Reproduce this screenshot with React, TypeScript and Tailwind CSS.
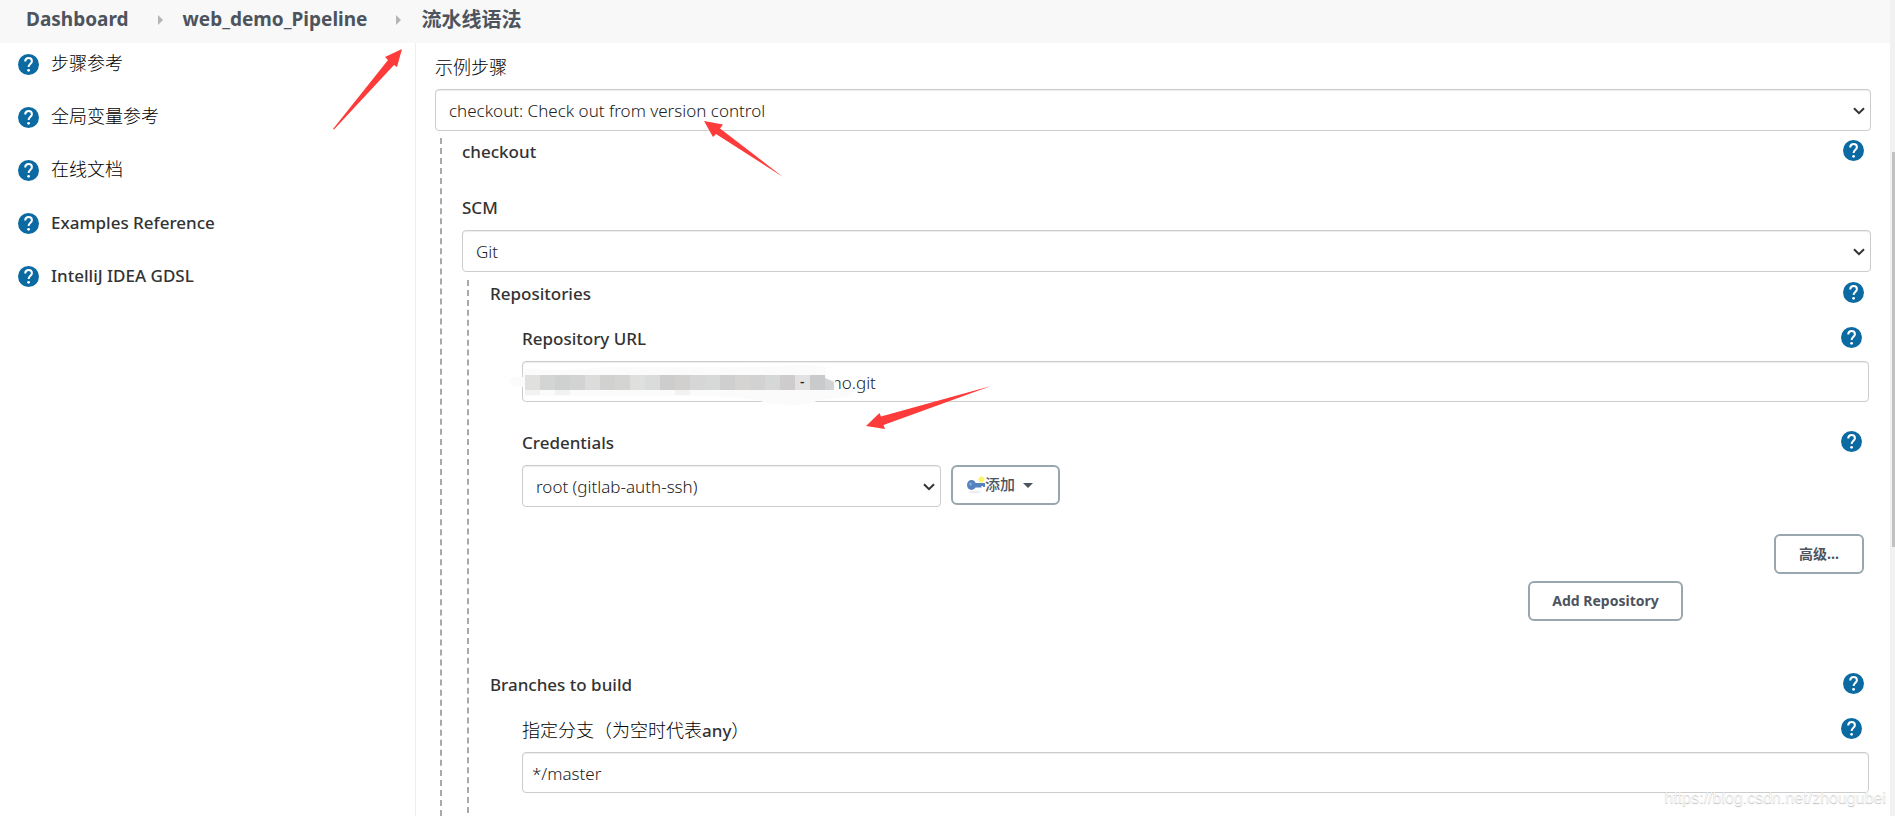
import React from 'react'

interface ISideLink {
    id: string;
    text: string;
    cjk?: boolean;
}

const sideLinks: ISideLink[] = [
    { id: "1", text: "步骤参考", cjk: true },
    { id: "2", text: "全局变量参考", cjk: true },
    { id: "3", text: "在线文档", cjk: true },
    { id: "4", text: "Examples Reference" },
    { id: "5", text: "IntelliJ IDEA GDSL" },
]

const mosaic = [
    "#e0e0df", "#d3d5d4", "#cfd1d0", "#d3d3d3", "#dcdcdc", "#d1d1d0", "#d4d4d3",
    "#dfdfdd", "#dadbdb", "#cdcdcd", "#d1d0cf", "#d5d6d5", "#d7d9d8", "#cfcfcf",
    "#d5d4d3", "#d3d2d2", "#d5d8d7", "#cfcccd", "#e2e2e2", "#c9cacc",
]

const fieldClass = "border border-[#ccc] rounded bg-white text-[17px] font-light text-[#222] shadow-[inset_0_1px_1px_rgba(0,0,0,0.075)]";
const buttonClass = "h-10 border-2 border-[#98a6ad] rounded-md bg-white text-sm font-bold text-[#4d545d]";

const HelpIcon = () => (
    <svg viewBox="0 0 21 21" className="w-[21px] h-[21px] shrink-0" aria-hidden="true">
        <circle cx="10.5" cy="10.5" r="10.5" fill="#0b6aa2" />
        <path d="M7.200 7.600c0-2.200 1.400-3.500 3.400-3.500s3.300 1.300 3.300 3.100c0 2.500-3.300 2.700-3.300 5.900" fill="none" stroke="#fff" strokeWidth="2" />
        <circle cx="10.600" cy="16.300" r="1.400" fill="#fff" />
    </svg>
)

const Crumb = () => (
    <svg viewBox="0 0 5 10" className="ml-[29px] mr-5 w-[5px] h-[10px]" aria-hidden="true">
        <path d="M0 0L5 5L0 10Z" fill="#b5b5b5" />
    </svg>
)

const KeyIcon = () => (
    <svg viewBox="0 0 18 18" className="w-[18px] h-[18px]" aria-hidden="true">
        <ellipse cx="8" cy="16" rx="6" ry="1.5" fill="#eee" />
        <circle cx="14.500" cy="3.500" r="3" fill="#fbf36a" />
        <ellipse cx="4.500" cy="9" rx="4.500" ry="5" fill="#5583bf" />
        <path d="M7.500 7H18v4h-2v-1h-1.500v1.500h-7z" fill="#5583bf" />
        <circle cx="3.500" cy="8" r="1.500" fill="#86abd9" />
    </svg>
)

interface IRow {
    children: React.ReactNode;
    htmlFor?: string;
    help?: string;
    className?: string;
}

const Row = ({ children, htmlFor, help, className = "" }: IRow) => (
    <div className={`flex items-start justify-between h-6 pt-px pr-[7px] leading-6 ${className}`}>
        {htmlFor ? <label htmlFor={htmlFor}>{children}</label> : <h3>{children}</h3>}
        {help && <button type="button" aria-label={help}><HelpIcon /></button>}
    </div>
)

interface ISelect {
    id: string;
    value: string;
    className?: string;
}

const Select = ({ id, value, className = "w-full" }: ISelect) => (
    <div className={`relative ${className}`}>
        <select id={id} className={`${fieldClass} block appearance-none h-[42px] w-full pl-[13px] pr-8 pt-0.5`}>
            <option>{value}</option>
        </select>
        <svg viewBox="0 0 12 8" className="absolute right-[6px] top-[18px] w-3 h-2 pointer-events-none" aria-hidden="true">
            <path d="M1 1.200L6 6.200L11 1.200" fill="none" stroke="#333" strokeWidth="2" />
        </svg>
    </div>
)

const Cjk = ({ children }: { children: React.ReactNode }) => (
    <span className="text-lg leading-6 font-light text-black">{children}</span>
)

const Redaction = () => (
    <svg viewBox="0 0 345 42" className="absolute -left-3 top-1 w-[345px] h-[42px]" aria-hidden="true">
        <path d="M6 12H14V6Q16 2 24 4Q60 6 100 2H200Q250 2 270 1Q300 -1 316 2V11L325 16L328 25H343Q343 31 334 32Q320 35 307 35Q304 40 280 40Q258 39 250 36Q240 32 190 31Q150 30 130 31H15V22H6Q0 20 0 16Q0 12 6 12Z" fill="#fbfbfb" />
        <path d="M15 25h15v5h-15zM45 25h15v5h-15zM165 25h15v5h-15z" fill="#f2f2f2" />
        {mosaic.map((color, i) => (
            <rect key={i} x={15 + i * 15} y="10" width="15" height="15" fill={color} />
        ))}
        <path d="M315 10V13L324 17V25H315Z" fill="#d3d3d3" />
        <text x="290" y="22" fontSize="14" fill="#222">-</text>
    </svg>
)

const App = () => {
  return (
    <div className="flex min-h-screen bg-white text-[17px] text-[#333] font-['Noto_Sans','Noto_Sans_CJK_SC',sans-serif]">
        <div className="relative flex flex-col flex-1 min-w-0">
            <nav className="flex items-center h-[43px] bg-[#f8f8f8] pl-[26px] pb-1 text-[19px] font-bold text-[#4d545d]">
                <a href="#dashboard">Dashboard</a>
                <Crumb />
                <a href="#pipeline">web_demo_Pipeline</a>
                <Crumb />
                <a href="#syntax" className="text-xl">流水线语法</a>
            </nav>
            <div className="flex flex-1">
                <aside className="w-[416px] shrink-0 border-r border-[#eaeff2] pt-[11px] pl-[18px]">
                    <ul className="flex flex-col gap-8">
                        {sideLinks.map((item) => (
                            <li key={item.id}>
                                <a href={`#${item.id}`} className="flex items-center gap-3 h-[21px]">
                                    <HelpIcon />
                                    <span className="pb-0.5 font-medium">{item.cjk ? <Cjk>{item.text}</Cjk> : item.text}</span>
                                </a>
                            </li>
                        ))}
                    </ul>
                </aside>
                <main className="flex flex-col flex-1 min-w-0 pl-[19px] pr-[19px] pt-[11px] font-medium">
                    <Row htmlFor="step"><Cjk>示例步骤</Cjk></Row>
                    <Select id="step" value="checkout: Check out from version control" className="mt-[11px] w-full" />
                    <section className="flex flex-col flex-1 mt-[7px] ml-[5px] border-l-2 border-dashed border-[#a9a9a9] pl-5 pt-px">
                        <Row help="checkout help">checkout</Row>
                        <Row htmlFor="scm" className="mt-8">SCM</Row>
                        <Select id="scm" value="Git" className="mt-[11px] w-full" />
                        <section className="mt-2 ml-[5px] border-l-2 border-dashed border-[#a9a9a9] pl-[21px] pt-px pb-5">
                            <Row help="Repositories help">Repositories</Row>
                            <div className="ml-8 mr-0.5 mt-[21px]">
                                <Row htmlFor="url" help="Repository URL help">Repository URL</Row>
                                <div className="relative mt-[11px]">
                                    <input id="url" defaultValue="demo.git" className={`${fieldClass} block h-[41px] w-full pl-[284px] pr-2 pt-0.5`} />
                                    <Redaction />
                                </div>
                                <Row htmlFor="cred" help="Credentials help" className="mt-7">Credentials</Row>
                                <div className="flex items-start gap-[10px] mt-[11px]">
                                    <Select id="cred" value="root (gitlab-auth-ssh)" className="w-[419px]" />
                                    <button type="button" className={`${buttonClass} flex items-center w-[109px] pl-[14px]`}>
                                        <KeyIcon />
                                        <span className="text-[15px] font-medium">添加</span>
                                        <svg viewBox="0 0 10 5" className="ml-2 w-[10px] h-[5px]" aria-hidden="true">
                                            <path d="M0 0H10L5 5Z" fill="#4d545d" />
                                        </svg>
                                    </button>
                                </div>
                                <div className="flex justify-end mt-[27px] mr-[5px]">
                                    <button type="button" className={`${buttonClass} w-[90px]`}>高级...</button>
                                </div>
                            </div>
                            <div className="flex justify-end mt-[7px] mr-[188px]">
                                <button type="button" className={`${buttonClass} w-[155px]`}>Add Repository</button>
                            </div>
                            <Row help="Branches help" className="mt-[51px]">Branches to build</Row>
                            <div className="ml-8 mr-0.5 mt-[21px]">
                                <Row htmlFor="branch" help="Branch specifier help">
                                    <Cjk>指定分支（为空时代表</Cjk>any<Cjk>）</Cjk>
                                </Row>
                                <input id="branch" defaultValue="*/master" className={`${fieldClass} block mt-[11px] h-[41px] w-full px-[9px] pt-0.5`} />
                            </div>
                        </section>
                    </section>
                </main>
            </div>

            {/* pointer arrows */}
            <svg viewBox="330 45 75 87" className="absolute left-[330px] top-[45px] w-[75px] h-[87px] pointer-events-none" aria-hidden="true">
                <path d="M402 49L385 57L388 60L333 129L334 129.500L394 65L397 67Z" fill="#fd3b3a" />
            </svg>
            <svg viewBox="700 117 86 63" className="absolute left-[700px] top-[117px] w-[86px] h-[63px] pointer-events-none" aria-hidden="true">
                <path d="M704 121L723 124.500L720 128.500L783 177L716 134L713 137Z" fill="#fd3b3a" />
            </svg>
            <svg viewBox="862 382 132 50" className="absolute left-[862px] top-[382px] w-[132px] h-[50px] pointer-events-none" aria-hidden="true">
                <path d="M866 426L879.500 413L881 416.500L991 386L883.500 425L885 429Z" fill="#fd3b3a" />
            </svg>
            <p className="absolute right-1 bottom-[6px] font-['Liberation_Sans',sans-serif] text-base text-white/80 [text-shadow:0_1px_1px_rgba(0,0,0,0.25)]">https://blog.csdn.net/zhougubei</p>
        </div>
        <div className="w-[5px] shrink-0 bg-[#f1f1f1] pl-0.5 pt-[152px]">
            <div className="h-[395px] bg-[#c1c1c1]" />
        </div>
    </div>
  )
}

export default App;
